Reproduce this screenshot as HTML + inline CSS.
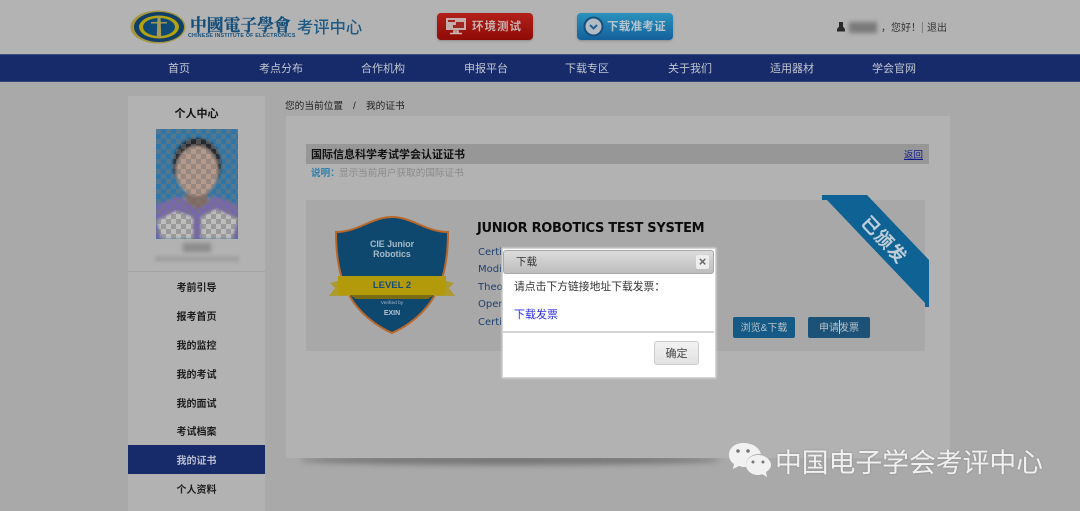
<!DOCTYPE html>
<html lang="zh"><head><meta charset="utf-8"><title>我的证书</title>
<style>
html,body{margin:0;padding:0}
body{width:1080px;height:511px;overflow:hidden;position:relative;background:#a9a9a9;font-family:"Liberation Sans","Noto Sans CJK SC",sans-serif;color:#222}
div,span,a{position:absolute;white-space:nowrap;box-sizing:border-box}
.nav{top:61px;color:#c3c7d2;font-size:11px;line-height:16px;width:70px;text-align:center}
.side{left:128px;width:137px;height:29px;text-align:center;font-size:10px;font-weight:bold;line-height:33px;color:#1c1c1c}
.cl{left:478px;font-size:10px;line-height:14px;color:#1f3f6e;font-family:"DejaVu Sans",sans-serif}
.btn{height:21px;border-radius:2px;color:#b8c2c8;font-size:10px;line-height:23px;text-align:center}
</style></head><body>
<div style="left:0;top:0;width:1080px;height:54px;background:#b3b3b3"></div>
<svg style="position:absolute;left:129px;top:8px" width="58" height="38" viewBox="0 0 58 38"><ellipse cx="29" cy="19" rx="27.500" ry="16.500" fill="#a5953f"/><ellipse cx="30" cy="19" rx="25" ry="15" fill="#0f3f68"/><ellipse cx="30" cy="19" rx="20" ry="11.500" fill="#b4a30e"/><ellipse cx="30" cy="19" rx="16" ry="9" fill="#0f4a76"/><path d="M28.500 8h3l.8 22h-4.600z" fill="#a49a56"/><path d="M22 14h16v1.500H22z" fill="#a49a56"/></svg>
<div style="left:190px;top:14px;font:bold 16.800px/20px 'Noto Serif CJK SC',serif;color:#164f7a;-webkit-text-stroke:.3px #164f7a">中國電子學會</div>
<div style="left:188px;top:32px;font:bold 5.300px/8px 'Liberation Sans',sans-serif;color:#164f7a;letter-spacing:.22px">CHINESE INSTITUTE OF ELECTRONICS</div>
<div style="left:297px;top:18px;font-size:16.300px;font-weight:500;line-height:21px;color:#1d5a84">考评中心</div>
<div style="left:437px;top:13px;width:96px;height:27px;border-radius:4px;background:linear-gradient(#b3201b,#8e0b06);box-shadow:0 1px 2px #8a8a8a"></div>
<svg style="position:absolute;left:445px;top:17px" width="22" height="19" viewBox="0 0 22 19"><path d="M1 1h20v12H1z" fill="#c3aeac"/><path d="M3 3h7v2H3zM11 5h8v6H8V8h3z" fill="#a32420"/><path d="M9 14h4v2H9zM5 16.500h12" stroke="#cdb8b6" stroke-width="1.600" fill="none"/></svg>
<div style="left:472px;top:19px;font-size:11.500px;font-weight:bold;line-height:17px;color:#c7b1ae;letter-spacing:1px">环境测试</div>
<div style="left:577px;top:13px;width:96px;height:27px;border-radius:4px;background:linear-gradient(#2a92bd,#14609c);box-shadow:0 1px 2px #8a8a8a"></div>
<svg style="position:absolute;left:583px;top:16px" width="21" height="21" viewBox="0 0 21 21"><circle cx="10.500" cy="10.500" r="10" fill="#16507f"/><circle cx="10.500" cy="10.500" r="8" fill="#b3bcc4"/><path d="M7 9l3.500 3.500L14 9" fill="none" stroke="#24608f" stroke-width="2"/></svg>
<div style="left:607px;top:19px;font-size:11.500px;font-weight:bold;line-height:17px;color:#b5c6d0;letter-spacing:.3px">下载准考证</div>
<svg style="position:absolute;left:836px;top:22px" width="10" height="10" viewBox="0 0 10 10"><path d="M3 0h4v4.500L9 7v2.500H1V7l2-2.500z" fill="#2a2a2a"/></svg>
<div style="left:849px;top:22px;width:28px;height:11px;background:#7a7a7a;filter:blur(2px)"></div>
<div style="left:881px;top:21px;font-size:10px;line-height:15px;color:#333">，您好！</div>
<div style="left:922px;top:22px;width:1px;height:11px;background:#7f7f7f"></div>
<div style="left:927px;top:21px;font-size:10px;line-height:15px;color:#333">退出</div>

<div style="left:0;top:54px;width:1080px;height:28px;background:#172a69;border-top:1px solid #41527f;border-bottom:1px solid #33447a"></div>
<div class="nav" style="left:144px">首页</div>
<div class="nav" style="left:246px">考点分布</div>
<div class="nav" style="left:348px">合作机构</div>
<div class="nav" style="left:451px">申报平台</div>
<div class="nav" style="left:552px">下载专区</div>
<div class="nav" style="left:655px">关于我们</div>
<div class="nav" style="left:757px">适用器材</div>
<div class="nav" style="left:859px">学会官网</div>

<div style="left:128px;top:96px;width:137px;height:415px;background:#b2b2b2"></div>
<div style="left:128px;top:106px;width:137px;text-align:center;font-size:11px;font-weight:bold;line-height:16px;color:#111">个人中心</div>
<svg style="position:absolute;left:156px;top:129px" width="82" height="110" viewBox="0 0 82 110"><defs><pattern id="c" width="10" height="10" patternUnits="userSpaceOnUse"><rect width="5" height="5" fill="#777"/><rect x="5" y="5" width="5" height="5" fill="#777"/></pattern><filter id="b"><feGaussianBlur stdDeviation="1.200"/></filter></defs><rect width="82" height="110" fill="#2f76a8"/><g filter="url(#b)"><path d="M0 78l22-9h38l22 9v32H0z" fill="#bdbdbd"/><path d="M0 76l22-9 18 8 20-8 22 9v14L60 80 45 88v22h-8V88L20 82 0 92z" fill="#7866ae"/><path d="M0 90l6 20H0zM82 90l-6 20h6z" fill="#7866ae"/><path d="M30 60h22v14l-11 6-11-6z" fill="#82695e"/><ellipse cx="41" cy="36" rx="24" ry="27" fill="#20252b"/><ellipse cx="41" cy="42" rx="21" ry="25" fill="#b59a8c"/></g><rect width="82" height="110" fill="url(#c)" fill-opacity=".5"/></svg>
<div style="left:183px;top:243px;width:28px;height:9px;background:#8c8c8c;filter:blur(2px)"></div>
<div style="left:155px;top:256px;width:84px;height:6px;background:#a1a1a1;filter:blur(1.500px)"></div>
<div style="left:128px;top:271px;width:137px;height:1px;background:#a3a3a3"></div>
<div class="side" style="top:272px">考前引导</div>
<div class="side" style="top:301px">报考首页</div>
<div class="side" style="top:330px">我的监控</div>
<div class="side" style="top:359px">我的考试</div>
<div class="side" style="top:388px">我的面试</div>
<div class="side" style="top:416px">考试档案</div>
<div class="side" style="top:445px;background:#172a69;color:#b9bed0">我的证书</div>
<div class="side" style="top:474px">个人资料</div>

<div style="left:285px;top:100px;font-size:9.700px;line-height:14px;color:#222">您的当前位置</div>
<div style="left:353px;top:100px;font-size:10px;line-height:14px;color:#222">/</div>
<div style="left:366px;top:100px;font-size:9.700px;line-height:14px;color:#222">我的证书</div>

<div style="left:300px;top:455px;width:420px;height:10px;border-radius:50%;background:#777;filter:blur(3px)"></div>
<div style="left:286px;top:116px;width:664px;height:342px;background:#b2b2b2"></div>
<div style="left:306px;top:144px;width:623px;height:20px;background:#979797"></div>
<div style="left:311px;top:148px;font-size:11px;font-weight:bold;line-height:15px;color:#111">国际信息科学考试学会认证证书</div>
<div style="left:904px;top:149px;font-size:9.500px;line-height:13px;color:#101a8c;text-decoration:underline">返回</div>
<div style="left:311px;top:167px;font-size:9.600px;font-weight:bold;line-height:14px;color:#2f7fa9">说明：</div>
<div style="left:339px;top:167px;font-size:9.600px;line-height:14px;color:#8a8a8a">显示当前用户获取的国际证书</div>

<div style="left:306px;top:200px;width:619px;height:151px;background:#a8a8a8"></div>
<svg style="position:absolute;left:328px;top:216px" width="128" height="120" viewBox="0 0 128 120"><path d="M8 16C30 16 44 1 64 1C84 1 98 16 120 16C120 45 115 65 107 79C97 97 80 110 64 117C48 110 31 97 21 79C13 65 8 45 8 16Z" fill="#0f486f" stroke="#b9682a" stroke-width="2"/><path d="M10 65L2 67L7 72L1 80H22V79H10zM118 65L126 67L121 72L127 80H106V79H118z" fill="#ad9b2f"/><path d="M10 60H118V79H10z" fill="#b29a0b"/><path d="M22 79H106L100 83H28z" fill="#7b6b12"/><text x="64" y="31" text-anchor="middle" font-family="Liberation Sans" font-size="8.800" font-weight="bold" fill="#a9bac7">CIE Junior</text><text x="64" y="41" text-anchor="middle" font-family="Liberation Sans" font-size="8.800" font-weight="bold" fill="#a9bac7">Robotics</text><text x="64" y="72" text-anchor="middle" font-family="Liberation Sans" font-size="9.500" font-weight="bold" fill="#144d7a">LEVEL 2</text><text x="64" y="88" text-anchor="middle" font-family="Liberation Sans" font-size="4.800" fill="#a9bac7">Verified by</text><text x="64" y="99" text-anchor="middle" font-family="Liberation Sans" font-size="7" font-weight="bold" fill="#b8c5cf">EXIN</text></svg>
<div style="left:477px;top:220px;font:bold 13px/18px 'DejaVu Sans',sans-serif;color:#0c0c0c;letter-spacing:-.3px">JUNIOR ROBOTICS TEST SYSTEM</div>
<div class="cl" style="top:246px">Certi</div>
<div class="cl" style="top:263px">Modi</div>
<div class="cl" style="top:281px">Theo</div>
<div class="cl" style="top:298px">Oper</div>
<div class="cl" style="top:316px">Certi</div>

<svg style="position:absolute;left:822px;top:194px" width="108" height="118" viewBox="0 0 108 118"><path d="M0 1H45L107 66V113H103V109L5 6H0z" fill="#0f6294"/><text x="0" y="0" transform="translate(62 46) rotate(47)" text-anchor="middle" font-family="Liberation Sans,Noto Sans CJK SC" font-size="18" font-weight="bold" letter-spacing="1" fill="#bfced8" dy="6">已颁发</text></svg>
<div class="btn" style="left:733px;top:317px;width:62px;background:#155a86">浏览&amp;下载</div>
<div class="btn" style="left:808px;top:317px;width:62px;background:#1d5278">申请发票</div>
<div style="left:839px;top:320px;width:1px;height:14px;background:#ccd"></div>

<div style="left:502px;top:248px;width:214px;height:130px;background:#fff;border:1px solid #d5d5d5;box-shadow:0 0 2px #eee"></div>
<div style="left:503px;top:250px;width:211px;height:24px;border:1px solid #a8a8a8;border-radius:3px;background:linear-gradient(#dcdcdc,#bdbdbd)"></div>
<div style="left:516px;top:255px;font-size:10.500px;line-height:15px;color:#333">下载</div>
<div style="left:696px;top:255px;width:13px;height:14px;background:#ededed;border-radius:2px;font:bold 13px/14px 'Liberation Sans';text-align:center;color:#666">×</div>
<div style="left:514px;top:280px;font-size:10.800px;line-height:15px;color:#333">请点击下方链接地址下载发票：</div>
<div style="left:514px;top:307px;font-size:11px;line-height:16px;color:#2c2ce8">下载发票</div>
<div style="left:503px;top:331px;width:211px;height:2px;background:#d4d4d4"></div>
<div style="left:654px;top:341px;width:45px;height:24px;border:1px solid #ccc;border-radius:3px;background:linear-gradient(#f2f2f2,#e2e2e2);font-size:11px;line-height:24px;text-align:center;color:#444">确定</div>

<svg style="position:absolute;left:728px;top:442px" width="44" height="38" viewBox="0 0 44 38"><path d="M15 1C7 1 1 6 1 13c0 4 2 7 5 9l-1 5 6-3c1 0 3 1 4 1h3c-1-8 6-14 15-13C31 5 24 1 15 1z" fill="#f1f1f1"/><path d="M30 13c-7 0-12 5-12 10s5 10 12 10c1 0 3 0 4-1l5 3-1-5c3-2 5-4 5-7 0-5-6-10-13-10z" fill="#f1f1f1"/><circle cx="10" cy="9" r="1.800" fill="#777"/><circle cx="20" cy="9" r="1.800" fill="#777"/><circle cx="25" cy="20" r="1.500" fill="#777"/><circle cx="35" cy="20" r="1.500" fill="#777"/></svg>
<div style="left:775px;top:446px;font-size:26.800px;line-height:34px;color:#f0f0f0;text-shadow:0 0 2px #888">中国电子学会考评中心</div>
</body></html>
